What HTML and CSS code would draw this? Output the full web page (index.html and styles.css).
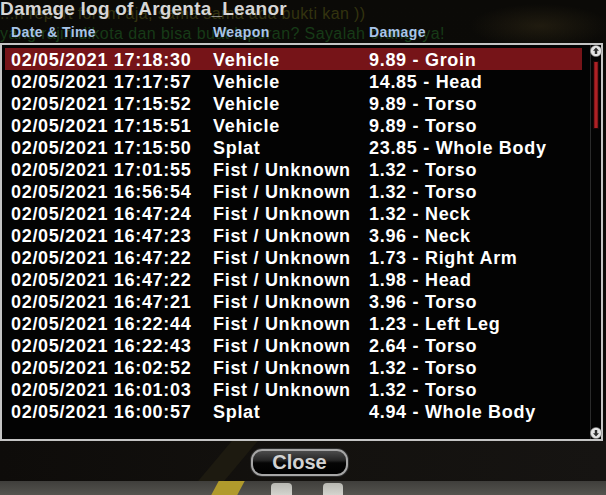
FILE: index.html
```html
<!DOCTYPE html>
<html lang="en">
<head>
<meta charset="utf-8">
<title>Damage log</title>
<link rel="stylesheet" href="styles.css">
</head>
<body>
<div class="scene">
  <div class="chat">
    <p class="chat-line chat-ooc">...n report forum aja, sama sama ada bukti kan ))</p>
    <p class="chat-line chat-ic">yang rajin dikota dan bisa buat laporan? Sayalah orangnya!</p>
  </div>
  <div class="haze"></div>
  <div class="road-mark"></div>
  <div class="street">
    <span class="stripe"></span>
    <span class="foot foot-left"></span>
    <span class="foot foot-right"></span>
  </div>
</div>

<div class="dialog">
  <h1 class="title">Damage log of Argenta_Leanor</h1>
  <div class="columns">
    <span>Date &amp; Time</span>
    <span>Weapon</span>
    <span>Damage</span>
  </div>

  <div class="list-box">
    <div class="rows">
      <div class="row selected"><span>02/05/2021 17:18:30</span><span>Vehicle</span><span>9.89 - Groin</span></div>
      <div class="row"><span>02/05/2021 17:17:57</span><span>Vehicle</span><span>14.85 - Head</span></div>
      <div class="row"><span>02/05/2021 17:15:52</span><span>Vehicle</span><span>9.89 - Torso</span></div>
      <div class="row"><span>02/05/2021 17:15:51</span><span>Vehicle</span><span>9.89 - Torso</span></div>
      <div class="row"><span>02/05/2021 17:15:50</span><span>Splat</span><span>23.85 - Whole Body</span></div>
      <div class="row"><span>02/05/2021 17:01:55</span><span>Fist / Unknown</span><span>1.32 - Torso</span></div>
      <div class="row"><span>02/05/2021 16:56:54</span><span>Fist / Unknown</span><span>1.32 - Torso</span></div>
      <div class="row"><span>02/05/2021 16:47:24</span><span>Fist / Unknown</span><span>1.32 - Neck</span></div>
      <div class="row"><span>02/05/2021 16:47:23</span><span>Fist / Unknown</span><span>3.96 - Neck</span></div>
      <div class="row"><span>02/05/2021 16:47:22</span><span>Fist / Unknown</span><span>1.73 - Right Arm</span></div>
      <div class="row"><span>02/05/2021 16:47:22</span><span>Fist / Unknown</span><span>1.98 - Head</span></div>
      <div class="row"><span>02/05/2021 16:47:21</span><span>Fist / Unknown</span><span>3.96 - Torso</span></div>
      <div class="row"><span>02/05/2021 16:22:44</span><span>Fist / Unknown</span><span>1.23 - Left Leg</span></div>
      <div class="row"><span>02/05/2021 16:22:43</span><span>Fist / Unknown</span><span>2.64 - Torso</span></div>
      <div class="row"><span>02/05/2021 16:02:52</span><span>Fist / Unknown</span><span>1.32 - Torso</span></div>
      <div class="row"><span>02/05/2021 16:01:03</span><span>Fist / Unknown</span><span>1.32 - Torso</span></div>
      <div class="row"><span>02/05/2021 16:00:57</span><span>Splat</span><span>4.94 - Whole Body</span></div>
    </div>

    <div class="scrollbar">
      <svg class="scroll-btn" viewBox="0 0 12 12" width="12" height="12">
        <circle cx="6" cy="6" r="5.6" fill="#e4e4e4" stroke="#7a7a7a" stroke-width="0.6"/>
        <path d="M6 2.4 L9 5.8 L7.2 5.8 L7.2 9 L4.8 9 L4.8 5.8 L3 5.8 Z" fill="#2e2e2e"/>
      </svg>
      <div class="track"><div class="thumb"></div></div>
      <svg class="scroll-btn" viewBox="0 0 12 12" width="12" height="12">
        <circle cx="6" cy="6" r="5.6" fill="#e4e4e4" stroke="#7a7a7a" stroke-width="0.6"/>
        <path d="M6 9.6 L9 6.2 L7.2 6.2 L7.2 3 L4.8 3 L4.8 6.2 L3 6.2 Z" fill="#2e2e2e"/>
      </svg>
    </div>
  </div>

  <div class="footer">
    <button class="close-btn" type="button">Close</button>
  </div>
</div>
</body>
</html>
```

FILE: styles.css
```css
html, body {
  margin: 0;
  padding: 0;
  width: 606px;
  height: 495px;
  overflow: hidden;
  background: #0b0a08;
}

/* game world behind the dialog */
.scene {
  position: absolute;
  inset: 0;
  background:
    radial-gradient(ellipse 70px 22px at 540px 26px, rgba(70, 58, 30, 0.35), transparent),
    linear-gradient(#0b0a07 0, #0c0b09 430px, #15120f 481px);
}

.chat {
  position: absolute;
  top: 4px;
  left: 0;
  font-family: "Liberation Sans", Arial, sans-serif;
  font-size: 16px;
  line-height: 20px;
  letter-spacing: 0.4px;
}

.chat-line {
  margin: 0;
  white-space: nowrap;
}

.chat-ooc {
  color: #33330f;
}

.chat-ic {
  color: #173a17;
}

.haze {
  position: absolute;
  left: 0;
  right: 0;
  top: 441px;
  height: 40px;
  background: linear-gradient(90deg, #0e0c0a 0, #13110e 50%, #161412 100%);
}

.road-mark {
  position: absolute;
  top: 441px;
  left: 215px;
  width: 26px;
  height: 40px;
  background: #1d1a10;
  transform: skewX(-40deg);
}

.street {
  position: absolute;
  left: 0;
  right: 0;
  top: 481px;
  bottom: 0;
  background: linear-gradient(#3f3e3b, #55544f);
  overflow: hidden;
}

.stripe {
  position: absolute;
  top: 0;
  left: 215px;
  width: 26px;
  height: 14px;
  background: #b09a2c;
  transform: skewX(-28deg);
}

.foot {
  position: absolute;
  top: 2px;
  height: 14px;
  background: linear-gradient(#b8b8b2, #d8d8d2);
  border-radius: 4px 4px 0 0;
}

.foot-left {
  left: 271px;
  width: 21px;
}

.foot-right {
  left: 323px;
  width: 20px;
  border-bottom: 3px solid #4a6fb0;
}

/* dialog window */
.dialog {
  position: absolute;
  top: 0;
  left: 0;
  width: 606px;
  height: 481px;
  display: flex;
  flex-direction: column;
  font-family: "Liberation Sans", Arial, sans-serif;
  font-weight: bold;
}

.title {
  margin: 0;
  height: 18px;
  font-size: 19px;
  line-height: 18px;
  color: #d6d6d6;
  letter-spacing: 0.2px;
  white-space: nowrap;
}

.columns {
  display: grid;
  grid-template-columns: 202px 156px 1fr;
  padding: 7px 0 0 11px;
  height: 18px;
  font-size: 14px;
  line-height: 15px;
  color: #a8c4e8;
  letter-spacing: 0.4px;
}

.list-box {
  width: 603px;
  height: 398px;
  box-sizing: border-box;
  border: 2px solid #c4c4c4;
  background: #030303;
  display: flex;
}

.rows {
  flex: 1;
  padding: 3px 0 0 3px;
}

.row {
  display: grid;
  grid-template-columns: 202px 156px 1fr;
  width: 577px;
  height: 22px;
  box-sizing: border-box;
  padding: 2px 0 0 6px;
  font-size: 18px;
  line-height: 20px;
  letter-spacing: 0.7px;
  color: #ffffff;
  white-space: nowrap;
}

.row.selected {
  background: #761418;
}

.scrollbar {
  width: 10px;
  border-left: 1px solid #2a2a2a;
  display: flex;
  flex-direction: column;
  align-items: center;
}

.scroll-btn {
  display: block;
  flex: none;
}

.track {
  flex: 1;
  width: 100%;
  display: flex;
  justify-content: center;
  padding-top: 5px;
}

.thumb {
  width: 4px;
  height: 66px;
  background: linear-gradient(90deg, #6e1214, #c3262b 50%, #6e1214);
  box-shadow: 0 0 0 1px #1a0606;
}

.footer {
  flex: 1;
  display: flex;
  align-items: flex-start;
  padding: 8px 0 0 251px;
}

.close-btn {
  width: 97px;
  height: 27px;
  box-sizing: border-box;
  border: 2px solid #a6a6a6;
  border-radius: 11px;
  box-shadow: 0 0 0 1px #2c2c2c;
  background: linear-gradient(#4c4c4c 0, #262626 40%, #050505 52%, #000 100%);
  color: #d2d2d2;
  font-family: "Liberation Sans", Arial, sans-serif;
  font-weight: bold;
  font-size: 20px;
  line-height: 21px;
  padding: 0;
}
```
